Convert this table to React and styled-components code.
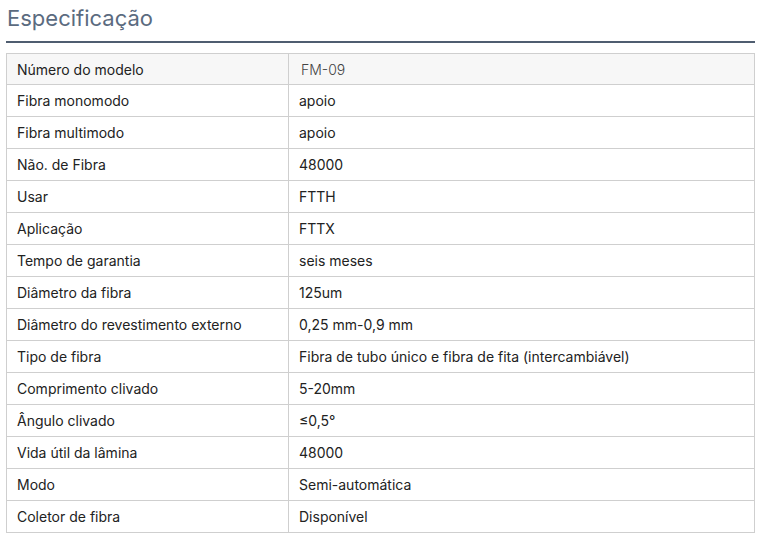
import React from "react";
import styled, { createGlobalStyle } from "styled-components";

const Global = createGlobalStyle`
  body { margin: 0; background: #fff; font-family: Inter, "Noto Sans", sans-serif; }
`;

const Page = styled.div`
  padding: 0 6px;
`;

const Title = styled.h2`
  margin: 0;
  padding-top: 3px;
  font-size: 22px;
  font-weight: 400;
  line-height: 30px;
  color: #5b6b7f;
  padding-left: 1px;
  padding-bottom: 8px;
  border-bottom: 2px solid #4f5d70;
`;

const Table = styled.table`
  margin-top: 10px;
  width: 749px;
  border-collapse: collapse;
  font-size: 14px;
  color: #222;
`;

const Row = styled.tr`
  height: ${(p) => (p.$head ? "31px" : "32px")};
  background: ${(p) => (p.$head ? "#f7f7f7" : "#fff")};
`;

const Cell = styled.td`
  border: 1px solid #cfcfcf;
  padding: 0 10px;
  vertical-align: middle;
  width: ${(p) => p.$w || "auto"};
  box-sizing: border-box;
  ${(p) => p.$light && "color: #444; padding-left: 12px; font-weight: 300;"}
`;

const rows = [
  ["Número do modelo", "FM-09"],
  ["Fibra monomodo", "apoio"],
  ["Fibra multimodo", "apoio"],
  ["Não. de Fibra", "48000"],
  ["Usar", "FTTH"],
  ["Aplicação", "FTTX"],
  ["Tempo de garantia", "seis meses"],
  ["Diâmetro da fibra", "125um"],
  ["Diâmetro do revestimento externo", "0,25 mm-0,9 mm"],
  ["Tipo de fibra", "Fibra de tubo único e fibra de fita (intercambiável)"],
  ["Comprimento clivado", "5-20mm"],
  ["Ângulo clivado", "≤0,5°"],
  ["Vida útil da lâmina", "48000"],
  ["Modo", "Semi-automática"],
  ["Coletor de fibra", "Disponível"],
];

export default function App() {
  return (
    <Page>
      <Global />
      <Title>Especificação</Title>
      <Table>
        <tbody>
          {rows.map(([k, v], i) => (
            <Row key={k} $head={i === 0}>
              <Cell $w="282px">{k}</Cell>
              <Cell $light={i === 0}>{v}</Cell>
            </Row>
          ))}
        </tbody>
      </Table>
    </Page>
  );
}
